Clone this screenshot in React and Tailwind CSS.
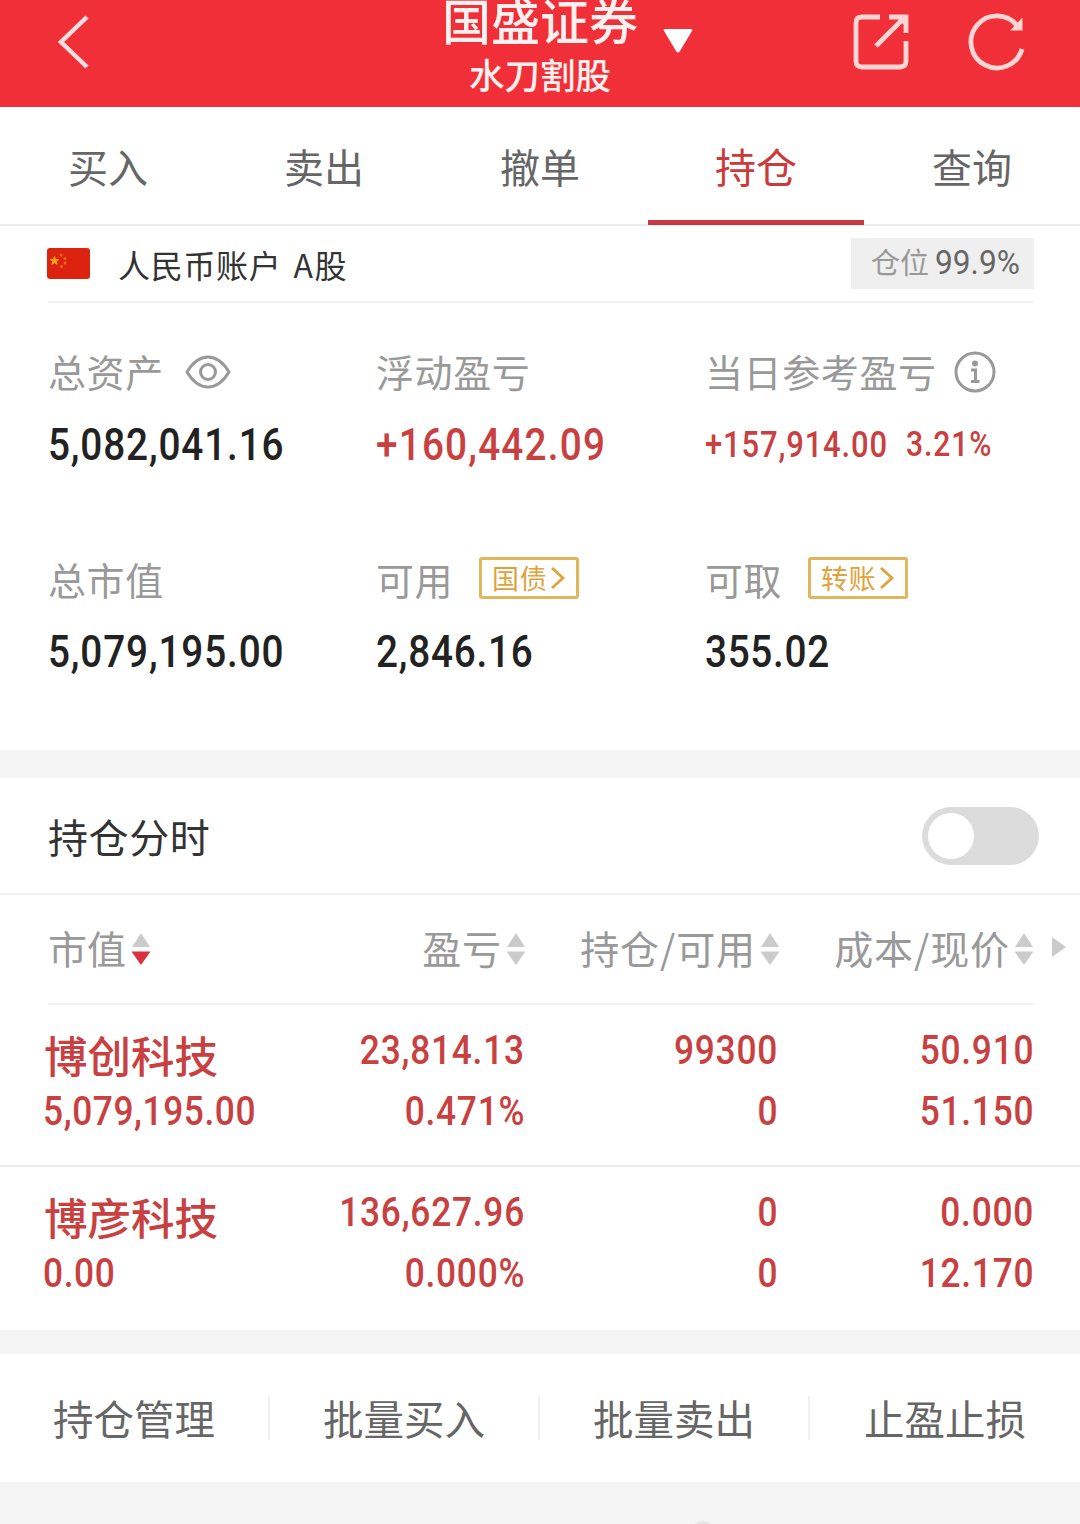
import React, { useState } from 'react';

const tabs = ['买入', '卖出', '撤单', '持仓', '查询'];

const columns = ['盈亏', '持仓/可用', '成本/现价'];

const holdings = [
  { name: '博创科技', value: '5,079,195.00', profit: '23,814.13', rate: '0.471%', amount: '99300', usable: '0', cost: '50.910', price: '51.150' },
  { name: '博彦科技', value: '0.00', profit: '136,627.96', rate: '0.000%', amount: '0', usable: '0', cost: '0.000', price: '12.170' },
];

const actions = ['持仓管理', '批量买入', '批量卖出', '止盈止损'];

// Condensed digits
const Num = ({ children, className = '' }) => (
  <span className={`block w-fit whitespace-nowrap font-['Roboto'] font-medium scale-x-[0.86] ${className}`}>{children}</span>
);

const Cell = ({ children }) => (
  <div className="h-[61px] flex justify-end">
    <Num className="origin-right tracking-[0.9px]">{children}</Num>
  </div>
);

const SortIcon = ({ active }) => (
  <svg className="w-5 h-8 shrink-0" viewBox="0 0 20 32">
    <path d="M10 0 L19 14 H1 Z" fill="#cbcbcb" />
    <path d="M0.5 18.5 H19.5 L10 32 Z" fill={active ? '#dc2f3f' : '#cbcbcb'} />
  </svg>
);

const Tag = ({ text }) => (
  <span className="flex items-center justify-center w-[100px] h-[42px] -mt-[1px] border-[3px] border-[#e2b65c] rounded-[3px] text-[27px] leading-none text-[#e0a23c]">
    <span className="-mt-[1px]">{text}</span>
    <svg className="w-4 h-6 ml-[3px]" viewBox="0 0 16 24" fill="none" stroke="#e0a23c" strokeWidth="2.8">
      <path d="M2 2 L13 12 L2 22" />
    </svg>
  </span>
);

const Header = () => (
  <div className="h-[107px] bg-[#f12f39] flex relative">
    <svg className="w-9 h-14 ml-[56px] mt-[14px]" viewBox="0 0 36 56" fill="none" stroke="#ffe0de" strokeWidth="4.5">
      <path d="M31 3 L5 28 L31 53" />
    </svg>
    <div className="absolute left-[340px] w-[400px] text-center text-[#fff0ee]">
      <div className="h-[50px] text-[49px] leading-[38px] font-medium">国盛证券</div>
      <div className="text-[35.5px] leading-[48px] font-medium">水刀割股</div>
    </div>
    <svg className="w-[30px] h-[26px] ml-[571px] mt-[28px]" viewBox="0 0 30 26">
      <path d="M2 1 H28 Q30 1 29 3 L17 23 Q15 26 13 23 L1 3 Q0 1 2 1 Z" fill="#fff" />
    </svg>
    <svg className="w-[56px] h-[56px] ml-[160px] mt-[14px]" viewBox="0 0 56 56" fill="none" stroke="#ffd6d3" strokeWidth="4.8">
      <path d="M27 3 H9 Q3 3 3 9 V47 Q3 53 9 53 H47 Q53 53 53 47 V27" />
      <path d="M23 32 L50 5 M36 3 H53 V19" />
      <path d="M43 3 H53 V13 Z" fill="#ffd6d3" stroke="none" />
    </svg>
    <svg className="w-[60px] h-[60px] ml-[59px] mt-[12px]" viewBox="0 0 60 60">
      <path d="M54 37 A26 26 0 1 1 49.5 14" fill="none" stroke="#ffd6d3" strokeWidth="4.8" />
      <path d="M54.5 5.5 V18.5 H42 Z" fill="#ffd6d3" />
    </svg>
  </div>
);

const App = () => {
  const [tab, setTab] = useState('持仓');

  return (
    <div className="w-[1080px] h-[1524px] overflow-hidden bg-[#f5f5f5] font-['Noto_Sans_CJK_SC',sans-serif]">
      <Header />

      {/* Tabs */}
      <div className="h-[119px] bg-white flex border-b-2 border-[#ededed]">
        {tabs.map((t) => (
          <button
            key={t}
            onClick={() => setTab(t)}
            className={`w-[216px] h-[118px] pt-[5px] border-b-[5px] ${
              t === tab ? 'text-[41px] text-[#cc3a3c] border-[#c63a40]' : 'text-[40px] text-[#666] border-transparent'
            }`}
          >
            {t}
          </button>
        ))}
      </div>

      {/* Account */}
      <div className="bg-white h-[524px] px-[46px]">
        <div className="ml-[2px] h-[77px] flex items-center border-b-2 border-[#f3f3f3]">
          <svg className="w-[43px] h-[31px] -ml-[1px]" viewBox="0 0 43 31">
            <rect width="43" height="31" rx="3" fill="#dc2310" />
            <path d="M7.5 8.5 L8.6 11.4 L11.7 11.5 L9.3 13.4 L10.1 16.4 L7.5 14.7 L4.9 16.4 L5.7 13.4 L3.3 11.5 L6.4 11.4 Z" fill="#f8a01c" stroke="#f8a01c" />
            <g fill="#ee6a18">
              <circle cx="14" cy="7" r="1.5" />
              <circle cx="18" cy="10.5" r="1.5" />
              <circle cx="18" cy="15" r="1.5" />
              <circle cx="14.5" cy="18.5" r="1.5" />
            </g>
          </svg>
          <span className="ml-[28px] text-[32px] tracking-[0.7px] text-[#333]">
            人民币账户<span className="ml-[4px]"> A</span>
            <span className="ml-[1px]">股</span>
          </span>
          <div className="ml-auto w-[183px] h-[51px] mb-[1px] pl-[20px] pb-[2px] bg-[#efeff0] flex items-center text-[29px] text-[#999] whitespace-nowrap">
            仓位
            <span className="ml-[6px] font-['Roboto'] text-[34px] text-[#666] origin-left scale-x-[0.93]">99.9%</span>
          </div>
        </div>

        <div className="ml-[2px] pt-[35px] grid grid-cols-[328px_329px_331px] text-[38px] tracking-[0.6px] text-[#999]">
          <div className="h-[208px]">
            <div className="h-[67px] pb-[3px] flex items-center">
              总资产
              <svg className="w-[46px] h-[34px] ml-[21px] mt-[3px]" viewBox="0 0 46 34" fill="none" stroke="#999" strokeWidth="3">
                <path d="M2 17 Q11 2 23 2 Q35 2 44 17 Q35 32 23 32 Q11 32 2 17 Z" />
                <circle cx="23" cy="17" r="7.5" />
              </svg>
            </div>
            <Num className="text-[45px] leading-[80px] tracking-[1px] text-[#222] origin-left">5,082,041.16</Num>
          </div>
          <div>
            <div className="h-[67px] pb-[3px] flex items-center">浮动盈亏</div>
            <Num className="text-[45px] leading-[80px] tracking-[1.4px] text-[#c8403f] origin-left">+160,442.09</Num>
          </div>
          <div>
            <div className="h-[67px] pb-[3px] flex items-center whitespace-nowrap">
              当日参考盈亏
              <svg className="w-[42px] h-[42px] ml-[17px] mt-[3px]" viewBox="0 0 42 42" fill="none" stroke="#999" strokeWidth="3">
                <circle cx="21" cy="21" r="19" />
                <circle cx="21" cy="12.5" r="3" fill="#999" stroke="none" />
                <path d="M17 19 H21.5 V31 M17 30.5 H25.5" />
              </svg>
            </div>
            <div className="flex text-[#c8403f] leading-[80px]">
              <div className="w-[201px]">
                <Num className="text-[36px] tracking-[1px] origin-left">+157,914.00</Num>
              </div>
              <Num className="text-[35px] tracking-[1px] origin-left">3.21%</Num>
            </div>
          </div>

          <div>
            <div className="h-[66px] pb-[2px] flex items-center">总市值</div>
            <Num className="text-[45px] leading-[80px] tracking-[1px] text-[#222] origin-left">5,079,195.00</Num>
          </div>
          <div>
            <div className="h-[66px] pb-[2px] flex items-center gap-[26px]">
              可用
              <Tag text="国债" />
            </div>
            <Num className="text-[45px] leading-[80px] tracking-[0.9px] text-[#222] origin-left">2,846.16</Num>
          </div>
          <div>
            <div className="h-[66px] pb-[2px] flex items-center gap-[26px]">
              可取
              <Tag text="转账" />
            </div>
            <Num className="text-[45px] leading-[80px] tracking-[0.8px] text-[#222] origin-left">355.02</Num>
          </div>
        </div>
      </div>

      {/* Time-sharing switch */}
      <div className="mt-[28px] h-[117px] bg-white border-b-2 border-[#f3f3f3] flex items-center justify-between pl-[48px] pr-[41px]">
        <span className="text-[40px] tracking-[0.6px] text-[#333]">持仓分时</span>
        <div className="w-[117px] h-[58px] rounded-full bg-[#dcdcdc] p-[6px]">
          <div className="size-[46px] rounded-full bg-white" />
        </div>
      </div>

      {/* Holdings */}
      <div className="bg-white h-[435px]">
        <div className="h-[110px] flex">
          <div className="w-[986px] ml-[48px] grid grid-cols-[256px_222px_254px_254px] items-center border-b-2 border-[#f5f5f5] text-[39px] text-[#999]">
            <div className="flex items-center gap-[5px]">
              <span className="-mt-[3px]">市值</span>
              <SortIcon active />
            </div>
            {columns.map((c) => (
              <div key={c} className="flex items-center justify-end gap-[4px] whitespace-nowrap">
                <span className="-mt-[3px] tracking-[0.9px]">{c}</span>
                <SortIcon />
              </div>
            ))}
          </div>
          <svg className="w-[14px] h-5 ml-[18px] mt-[42px]" viewBox="0 0 14 20">
            <path d="M0 0 L14 10 L0 20 Z" fill="#cbcbcb" />
          </svg>
        </div>

        {holdings.map((h, i) => (
          <div
            key={h.name}
            className={`h-[162px] pt-[15px] pl-[44px] grid grid-cols-[260px_221px_253px_256px] content-start text-[41px] leading-[61px] text-[#c8403f] ${
              i === 0 ? 'border-b-2 border-[#ededed]' : ''
            }`}
          >
            <div className="text-[43.5px] font-medium pt-1 h-[61px]">{h.name}</div>
            <Cell>{h.profit}</Cell>
            <Cell>{h.amount}</Cell>
            <Cell>{h.cost}</Cell>
            <Num className="origin-left tracking-[0.7px] -ml-[1px]">{h.value}</Num>
            <Cell>{h.rate}</Cell>
            <Cell>{h.usable}</Cell>
            <Cell>{h.price}</Cell>
          </div>
        ))}
      </div>

      {/* Bottom actions */}
      <div className="mt-[24px] h-[128px] bg-white flex items-center">
        {actions.map((a, i) => (
          <div
            key={a}
            className={`w-[270px] h-[44px] flex items-center justify-center text-[40.5px] text-[#666] ${
              i < 3 ? 'border-r-2 border-[#f0f0f0]' : ''
            }`}
          >
            {a}
          </div>
        ))}
      </div>
      <div className="w-[24px] h-[24px] mt-[39px] ml-[691px] rounded-full bg-[#e6e6e6]" />
    </div>
  );
};

export default App;
